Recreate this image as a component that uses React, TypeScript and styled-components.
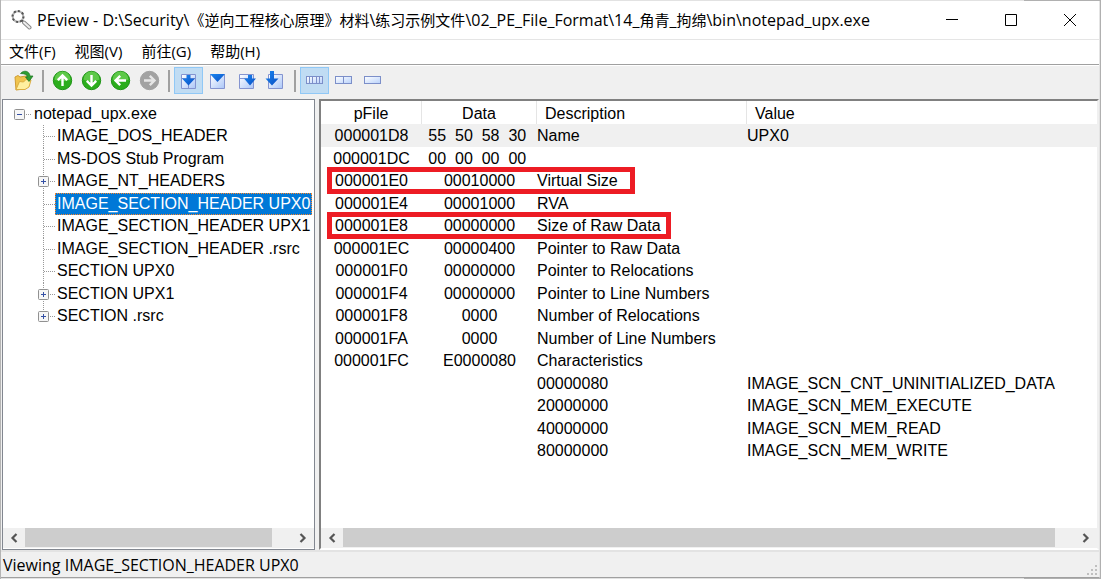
import React from 'react';
import styled, { createGlobalStyle, css } from 'styled-components';

const GlobalStyle = createGlobalStyle`
  *, *::before, *::after { box-sizing: border-box; }
  html, body, #root { height: 100%; }
  body { margin: 0; background: #c8c8c8; color: #000; overflow: hidden; }
  button { font: inherit; color: inherit; border: 0; padding: 0; background: none; }
  ul { list-style: none; margin: 0; padding: 0; }
`;

const uiFont = '"Open Sans", "Noto Sans CJK SC", sans-serif';
const listFont = '"Liberation Sans", "Noto Sans CJK SC", sans-serif';

const Desktop = styled.div`
  height: 100%;
  padding: 1px;
  display: flex;
  background: linear-gradient(90deg, #b4b4b4 1px, #e2e2e2 1px 93%, #b0b0b0 93%);
`;

const Window = styled.div`
  flex: 1;
  min-width: 0;
  display: flex;
  flex-direction: column;
  background: #f0f0f0;
  border-right: 1px solid #e4e4e4;
  border-bottom: 1px solid #a0a0a0;
`;

const TitleBar = styled.header`
  display: flex;
  align-items: center;
  height: 39px;
  flex: none;
  padding: 0 0 1px 9px;
  background: #fff;
  border-bottom: 1px solid #e5e5e5;
`;

const Title = styled.h1`
  flex: 1;
  min-width: 0;
  margin: 0 0 0 5px;
  font: 400 16px/20px ${uiFont};
  white-space: nowrap;
  overflow: hidden;
`;

const Han = styled.span`
  font-size: 15px;
`;

const CaptionButton = styled.button`
  width: 59px;
  height: 37px;
  display: grid;
  place-items: center;
`;

const MenuBar = styled.nav`
  display: flex;
  align-items: center;
  gap: 19px;
  height: 24px;
  flex: none;
  padding: 0 0 3px 8px;
  background: #fff;
`;

const MenuItem = styled.button`
  font: 400 15px/20px ${uiFont};
  white-space: nowrap;
`;

const Toolbar = styled.div`
  display: flex;
  align-items: center;
  height: 35px;
  flex: none;
  padding: 0 0 3px 8px;
  border-top: 1px solid #a0a0a0;
  box-shadow: inset 0 1px #fff;
`;

const ToolButton = styled.button<{ $on?: boolean }>`
  width: 29px;
  height: 27px;
  display: grid;
  place-items: center;
  ${(p) => p.$on && css`background: #c0dcf3; border: 1px solid #90c8f6;`}
`;

const Separator = styled.div`
  width: 2px;
  height: 22px;
  margin: 0 4px;
  background: #a0a0a0;
`;

const Panes = styled.main`
  display: grid;
  grid-template-columns: 313px minmax(0, 1fr);
  gap: 4px;
  flex: 1;
  min-height: 0;
  padding-left: 1px;
`;

const TreePane = styled.section`
  display: flex;
  flex-direction: column;
  min-width: 0;
  min-height: 0;
  padding-bottom: 1px;
  background: #fff;
  border: 1px solid #828790;
`;

const ListPane = styled.section`
  display: flex;
  flex-direction: column;
  min-width: 0;
  min-height: 0;
  background: #fff;
  border: 2px solid #fff;
  border-top-color: #808080;
  border-left-color: #808080;
  border-right-color: #f0f0f0;
`;

const PaneBody = styled.div`
  flex: 1;
  min-height: 0;
  overflow: hidden;
`;

const Tree = styled.ul`
  display: grid;
  grid-auto-rows: 22px 23px;
  padding-top: 3px;
  font: 400 16px/22px ${listFont};
`;

const TreeRow = styled.li<{ $root?: boolean }>`
  display: flex;
  align-items: flex-start;
  padding-left: ${(p) => (p.$root ? 10 : 34)}px;
  white-space: nowrap;
`;

const TreeLabel = styled.span<{ $selected?: boolean }>`
  padding: 0 2px;
  ${(p) =>
    p.$selected &&
    css`
      background: #0078d7;
      color: #fff;
      outline: 1px dotted #ff8728;
      outline-offset: -1px;
    `}
`;

const Scrollbar = styled.div`
  display: flex;
  align-items: center;
  height: 20px;
  flex: none;
  background: #f0f0f0;
`;

const ScrollButton = styled.button`
  width: 22px;
  height: 20px;
  display: grid;
  place-items: center;
`;

const Track = styled.div<{ $rest: number }>`
  flex: 1;
  align-self: stretch;
  padding: 0 ${(p) => p.$rest}px 1px 0;
`;

const Thumb = styled.div`
  height: 100%;
  background: #cdcdcd;
`;

const Table = styled.table`
  width: 100%;
  table-layout: fixed;
  border-collapse: separate;
  border-spacing: 0;
  font: 400 16px/20px ${listFont};
  white-space: pre;
`;

const Col = styled.col<{ $w?: number }>`
  ${(p) => p.$w && `width: ${p.$w}px;`}
`;

const HeadCell = styled.th<{ $center?: boolean }>`
  height: 23px;
  padding: 2px 0 0 ${(p) => (p.$center ? 0 : 8)}px;
  border-right: 1px solid #e5e5e5;
  font-weight: 400;
  text-align: ${(p) => (p.$center ? 'center' : 'left')};
  &:last-child { border-right: 0; }
`;

const Row = styled.tr`
  height: 23px;
  &:nth-child(even) { height: 22px; }
  &:first-child { background: #f0f0f0; }
`;

const Cell = styled.td<{ $center?: boolean }>`
  position: relative;
  padding: 2px 0 0;
  vertical-align: top;
  text-align: ${(p) => (p.$center ? 'center' : 'left')};
`;

const Mark = styled.span<{ $w: number }>`
  position: absolute;
  z-index: 1;
  left: 6px;
  top: -2px;
  width: ${(p) => p.$w}px;
  height: 27px;
  border: 5px solid #ed1c24;
  pointer-events: none;
`;

const StatusBar = styled.footer`
  display: flex;
  align-items: center;
  justify-content: space-between;
  height: 27px;
  flex: none;
  padding: 0 1px 0 2px;
  border-top: 2px solid #e3e3e3;
  font: 400 16px/24px ${uiFont};
`;

const Grip = styled.svg`
  align-self: flex-end;
  margin-bottom: 1px;
`;

const AppIcon = () => (
  <svg width="22" height="22" viewBox="0 0 22 22" fill="none">
    <circle cx="8" cy="7.500" r="5.300" stroke="#b5b5b5" strokeWidth="2" />
    <circle cx="8" cy="7.500" r="5.500" stroke="#555" strokeWidth="2" strokeDasharray="2 2.200" />
    <path d="M12 11.500l2 2" stroke="#444" strokeWidth="2" />
    <path d="M14 13.500l5.500 5" stroke="#888" strokeWidth="4" strokeLinecap="round" />
    <path d="M14 13.500l5.500 5" stroke="#eee" strokeWidth="2" strokeLinecap="round" />
  </svg>
);

const OpenIcon = () => (
  <svg width="21" height="21" viewBox="0 0 21 21">
    <path d="M2 7l3-1.500 2 1.500 6-1 3 3v6l-5 4-8 1z" fill="#f0c44e" stroke="#cf9c33" />
    <path d="M3 19.500l3.500-8 4 .5 2.500-2.500 5 .5-2 7-4 2.500z" fill="#fff0a0" stroke="#dcae42" />
    <path d="M7.500 3.500C11-.5 16.500 1 17 6h3l-4 5.500L12.500 7h2c-.5-2.500-3-3.500-7-3.500z" fill="#2f9e33" stroke="#17721d" strokeWidth=".7" />
  </svg>
);

const ArrowIcon = ({ turn, off }: { turn: number; off?: boolean }) => (
  <svg width="21" height="21" viewBox="0 0 21 21">
    <circle cx="10.500" cy="10.500" r="9.200" fill={off ? '#a2a2a2' : '#2bad1c'} stroke={off ? '#a2a2a2' : '#1f9417'} />
    {!off && <path d="M2.500 9.500a8 8 0 0 1 16 0c-4 2-12 2-16 0z" fill="#7fdc66" opacity=".6" />}
    <path
      d="M10.500 16V6M5.800 10.200l4.700-4.700 4.700 4.700"
      fill="none"
      stroke={off ? '#e6e6e6' : '#fff'}
      strokeWidth="2.400"
      transform={`rotate(${turn} 10.500 10.500)`}
    />
  </svg>
);

type PageKind = 'into' | 'fold' | 'right' | 'left';

const arrowShapes: Record<PageKind, string> = {
  into: 'M8.500 5h4v3.500h4.500l-6.500 7-6.500-7H8.500z',
  fold: 'M3 4h15l-7.500 8z',
  right: 'M12 5h4v3.500h4l-6 7-6-7h4z',
  left: 'M5 1h4v7.500h4.500l-6.500 7-6.500-7H5z',
};

const PageIcon = ({ kind }: { kind: PageKind }) => (
  <svg width="21" height="21" viewBox="0 0 21 21">
    <defs>
      <linearGradient id={`page-${kind}`} x2="1" y2="1">
        <stop offset="0" stopColor="#fff" />
        <stop offset="1" stopColor="#aac6f8" />
      </linearGradient>
      <linearGradient id={`arrow-${kind}`} x2="1" y2="1">
        <stop offset="0" stopColor="#1a86f0" />
        <stop offset="1" stopColor="#0a4fc4" />
      </linearGradient>
    </defs>
    <path d="M3.500 4.500h14v14h-14z" fill={`url(#page-${kind})`} stroke="#8494d0" />
    {kind === 'into' && <path d="M4 8.500h13M10.500 14v4" stroke="#8494d0" fill="none" />}
    {kind === 'right' && <path d="M4 8.500h8" stroke="#8494d0" fill="none" />}
    <path d={arrowShapes[kind]} fill={`url(#arrow-${kind})`} />
  </svg>
);

const BarsIcon = ({ parts }: { parts: number }) => (
  <svg width="17" height="9" viewBox="0 0 17 9">
    <defs>
      <linearGradient id={`bars-${parts}`} x2="1" y2="1">
        <stop offset="0" stopColor="#fff" />
        <stop offset="1" stopColor="#b9d2fb" />
      </linearGradient>
    </defs>
    <rect x=".5" y=".5" width="16" height="7" fill={`url(#bars-${parts})`} stroke="#7c8fc9" />
    {Array.from({ length: parts - 1 }, (_, i) => (
      <path key={i} d={`M${Math.round((16 * (i + 1)) / parts) + 0.5} 1v6`} stroke="#7c8fc9" />
    ))}
  </svg>
);

const Chevron = ({ right }: { right?: boolean }) => (
  <svg width="8" height="10" viewBox="0 0 8 10">
    <path d={right ? 'M1.500 1l4 4-4 4' : 'M6.500 1l-4 4 4 4'} fill="none" stroke="#555" strokeWidth="2.200" />
  </svg>
);

/* Dotted branch lines and the expander box in front of a tree label. */
const Branch = ({ box, root, last }: { box?: 'plus' | 'minus'; root?: boolean; last?: boolean }) => (
  <svg width={root ? 19 : 18} height="23" viewBox={`0 0 ${root ? 19 : 18} 23`} fill="none">
    {!root && <path d={last ? 'M6.500 0v12' : 'M6.500 0v23'} stroke="#999" strokeDasharray="1 1" />}
    <path d="M7 11.500h11" stroke="#999" strokeDasharray="1 1" />
    {box && (
      <>
        <rect x="1.500" y="6.500" width="10" height="10" rx="1" fill="#f6f6f6" stroke="#919191" />
        <path d={box === 'plus' ? 'M4 11.500h5M6.500 9v5' : 'M4 11.500h5'} stroke="#3450a5" />
      </>
    )}
  </svg>
);

const treeItems: { label: string; box?: 'plus'; selected?: boolean }[] = [
  { label: 'IMAGE_DOS_HEADER' },
  { label: 'MS-DOS Stub Program' },
  { label: 'IMAGE_NT_HEADERS', box: 'plus' },
  { label: 'IMAGE_SECTION_HEADER UPX0', selected: true },
  { label: 'IMAGE_SECTION_HEADER UPX1' },
  { label: 'IMAGE_SECTION_HEADER .rsrc' },
  { label: 'SECTION UPX0' },
  { label: 'SECTION UPX1', box: 'plus' },
  { label: 'SECTION .rsrc', box: 'plus' },
];

const rows: { cells: string[]; mark?: number }[] = [
  { cells: ['000001D8', '55  50  58  30 ', 'Name', 'UPX0'] },
  { cells: ['000001DC', '00  00  00  00 ', '', ''] },
  { cells: ['000001E0', '00010000', 'Virtual Size', ''], mark: 308 },
  { cells: ['000001E4', '00001000', 'RVA', ''] },
  { cells: ['000001E8', '00000000', 'Size of Raw Data', ''], mark: 344 },
  { cells: ['000001EC', '00000400', 'Pointer to Raw Data', ''] },
  { cells: ['000001F0', '00000000', 'Pointer to Relocations', ''] },
  { cells: ['000001F4', '00000000', 'Pointer to Line Numbers', ''] },
  { cells: ['000001F8', '0000', 'Number of Relocations', ''] },
  { cells: ['000001FA', '0000', 'Number of Line Numbers', ''] },
  { cells: ['000001FC', 'E0000080', 'Characteristics', ''] },
  { cells: ['', '', '00000080', 'IMAGE_SCN_CNT_UNINITIALIZED_DATA'] },
  { cells: ['', '', '20000000', 'IMAGE_SCN_MEM_EXECUTE'] },
  { cells: ['', '', '40000000', 'IMAGE_SCN_MEM_READ'] },
  { cells: ['', '', '80000000', 'IMAGE_SCN_MEM_WRITE'] },
];

const HScroll = ({ rest }: { rest: number }) => (
  <Scrollbar>
    <ScrollButton aria-label="Scroll left"><Chevron /></ScrollButton>
    <Track $rest={rest}><Thumb /></Track>
    <ScrollButton aria-label="Scroll right"><Chevron right /></ScrollButton>
  </Scrollbar>
);

export default function App() {
  return (
    <>
      <GlobalStyle />
      <Desktop>
        <Window>
          <TitleBar>
            <AppIcon />
            <Title>
              PEview - D:\Security\<Han>《逆向工程核心原理》材料</Han>\<Han>练习示例文件</Han>
              \02_PE_File_Format\14_<Han>角青</Han>_<Han>拘绵</Han>\bin\notepad_upx.exe
            </Title>
            <CaptionButton aria-label="Minimize">
              <svg width="12" height="12"><path d="M0 5.500h12" stroke="#000" /></svg>
            </CaptionButton>
            <CaptionButton aria-label="Maximize">
              <svg width="12" height="12"><path d="M.5.5h11v11H.5z" fill="none" stroke="#000" /></svg>
            </CaptionButton>
            <CaptionButton aria-label="Close">
              <svg width="12" height="12"><path d="M0 0l12 12M12 0L0 12" stroke="#000" /></svg>
            </CaptionButton>
          </TitleBar>
          <MenuBar>
            <MenuItem>文件(F)</MenuItem>
            <MenuItem>视图(V)</MenuItem>
            <MenuItem>前往(G)</MenuItem>
            <MenuItem>帮助(H)</MenuItem>
          </MenuBar>
          <Toolbar>
            <ToolButton aria-label="Open"><OpenIcon /></ToolButton>
            <Separator />
            <ToolButton aria-label="Up"><ArrowIcon turn={0} /></ToolButton>
            <ToolButton aria-label="Down"><ArrowIcon turn={180} /></ToolButton>
            <ToolButton aria-label="Back"><ArrowIcon turn={270} /></ToolButton>
            <ToolButton aria-label="Forward"><ArrowIcon turn={90} off /></ToolButton>
            <Separator />
            <ToolButton aria-label="Address" $on><PageIcon kind="into" /></ToolButton>
            <ToolButton aria-label="Offset"><PageIcon kind="fold" /></ToolButton>
            <ToolButton aria-label="Next"><PageIcon kind="right" /></ToolButton>
            <ToolButton aria-label="Previous"><PageIcon kind="left" /></ToolButton>
            <Separator />
            <ToolButton aria-label="Bytes" $on><BarsIcon parts={5} /></ToolButton>
            <ToolButton aria-label="Words"><BarsIcon parts={2} /></ToolButton>
            <ToolButton aria-label="Double words"><BarsIcon parts={1} /></ToolButton>
          </Toolbar>
          <Panes>
            <TreePane>
              <PaneBody>
                <Tree>
                  <TreeRow $root>
                    <Branch box="minus" root />
                    <TreeLabel>notepad_upx.exe</TreeLabel>
                  </TreeRow>
                  {treeItems.map((item, i) => (
                    <TreeRow key={item.label}>
                      <Branch box={item.box} last={i === treeItems.length - 1} />
                      <TreeLabel $selected={item.selected}>{item.label}</TreeLabel>
                    </TreeRow>
                  ))}
                </Tree>
              </PaneBody>
              <HScroll rest={20} />
            </TreePane>
            <ListPane>
              <PaneBody>
                <Table>
                  <colgroup>
                    <Col $w={101} />
                    <Col $w={115} />
                    <Col $w={210} />
                    <Col />
                  </colgroup>
                  <thead>
                    <tr>
                      <HeadCell $center>pFile</HeadCell>
                      <HeadCell $center>Data</HeadCell>
                      <HeadCell>Description</HeadCell>
                      <HeadCell>Value</HeadCell>
                    </tr>
                  </thead>
                  <tbody>
                    {rows.map(({ cells, mark }, r) => (
                      <Row key={r}>
                        {cells.map((text, c) => (
                          <Cell key={c} $center={c < 2}>
                            {text}
                            {c === 0 && mark && <Mark $w={mark} />}
                          </Cell>
                        ))}
                      </Row>
                    ))}
                  </tbody>
                </Table>
              </PaneBody>
              <HScroll rest={20} />
            </ListPane>
          </Panes>
          <StatusBar>
            <span>Viewing IMAGE_SECTION_HEADER UPX0</span>
            <Grip width="11" height="11" viewBox="0 0 11 11" fill="#bfbfbf">
              <path d="M8 0h2v2H8zM4 4h2v2H4zM8 4h2v2H8zM0 8h2v2H0zM4 8h2v2H4zM8 8h2v2H8z" />
            </Grip>
          </StatusBar>
        </Window>
      </Desktop>
    </>
  );
}
